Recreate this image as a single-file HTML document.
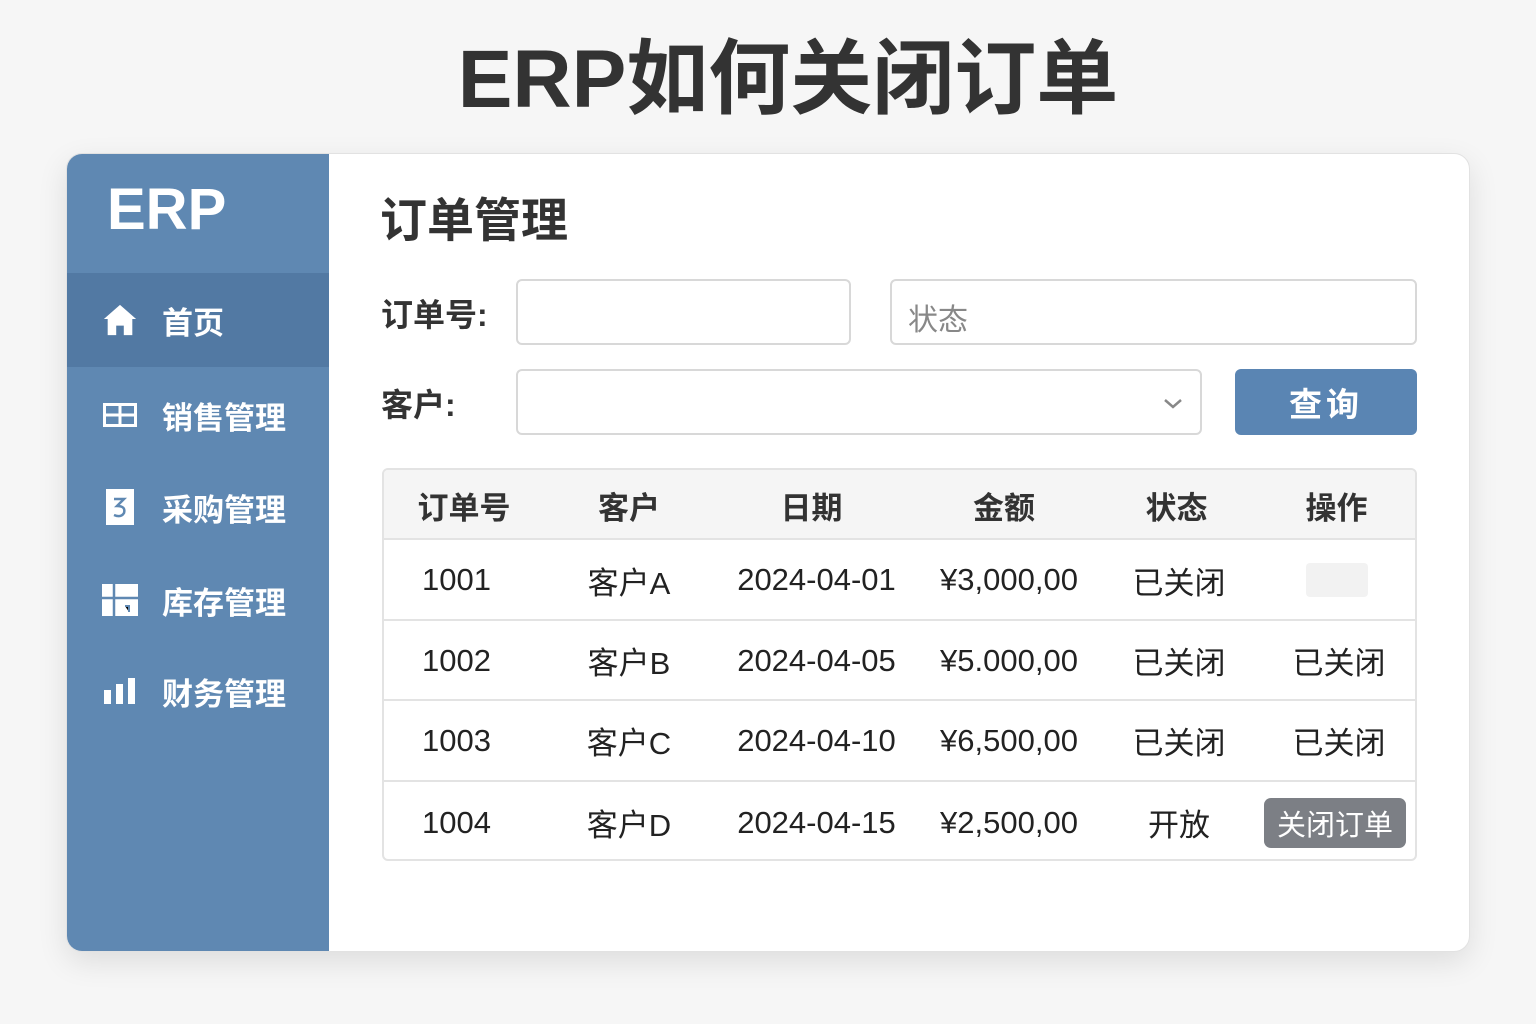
<!DOCTYPE html>
<html><head><meta charset="utf-8"><style>
*{margin:0;padding:0;box-sizing:border-box}
body{width:1536px;height:1024px;background:#f6f6f6;font-family:"Liberation Sans","Noto Sans CJK SC",sans-serif;position:relative;overflow:hidden;color:#222}
.title{position:absolute;top:30px;left:20px;width:1536px;text-align:center;font-size:82px;font-weight:bold;color:#333;line-height:100px}
.card{position:absolute;left:66px;top:153px;width:1404px;height:799px;background:#fff;border-radius:16px;box-shadow:0 10px 30px rgba(0,0,0,.1);overflow:hidden;border:1px solid #e2e2e2}
.side{position:absolute;left:0;top:0;width:262px;height:100%;background:#5f88b2}
.logo{position:absolute;left:40px;top:22px;font-size:58px;font-weight:bold;color:#fff}
.item{position:absolute;left:0;width:262px;height:94px;display:flex;align-items:center;color:#fff;font-size:31px;font-weight:bold}
.item.act{background:#5279a3}
.item .ic{width:36px;margin-left:35px;margin-right:24px;display:flex;justify-content:center}
.abs{position:absolute}
.lbl{font-size:32px;color:#333;font-weight:bold}
.inp{position:absolute;border:2px solid #d8d8d8;border-radius:6px;background:#fff}
.btn{position:absolute;left:1168px;top:215px;width:182px;height:66px;background:#5a85b3;border-radius:6px;color:#fff;font-size:33px;font-weight:bold;display:flex;align-items:center;justify-content:center;letter-spacing:4px}
.tbl{position:absolute;left:315px;top:314px;width:1035px;height:393px;border:2px solid #e3e3e3;border-radius:6px;overflow:hidden}
.row{position:absolute;left:0;width:100%;border-top:2px solid #e3e3e3}
.c{position:absolute;top:0;height:100%;display:flex;align-items:center;justify-content:center;font-size:31px;color:#222}
.hd{background:#f5f5f5;border-top:none}
.hd .c{font-weight:bold;color:#333}
</style></head><body>
<div class="title">ERP如何关闭订单</div>
<div class="card">
<div class="side">
<div class="logo">ERP</div>
<div class="item act" style="top:119px"><span class="ic"><svg width="38" height="36" viewBox="0 0 38 36"><path d="M19 2 L36 17 L32 17 L32 34 L23 34 L23 24 L15 24 L15 34 L6 34 L6 17 L2 17Z" fill="#fff"/></svg></span>首页</div>
<div class="item" style="top:214px"><span class="ic"><svg width="34" height="24" viewBox="0 0 34 24"><rect x="1.5" y="1.5" width="31" height="21" fill="none" stroke="#fff" stroke-width="3"/><path d="M1.5 12H32.5M17 1.5V22.5" stroke="#fff" stroke-width="3"/></svg></span>销售管理</div>
<div class="item" style="top:306px"><span class="ic"><svg width="28" height="36" viewBox="0 0 28 36"><rect width="28" height="36" fill="#fff"/><path d="M8 10H18L11 17Q20 17 18 24Q15 29 8 26" stroke="#5f88b2" stroke-width="2.5" fill="none"/></svg></span>采购管理</div>
<div class="item" style="top:399px"><span class="ic"><svg width="36" height="32" viewBox="0 0 36 32"><rect width="36" height="32" fill="#fff"/><path d="M0 14H36M12 0V32" stroke="#5f88b2" stroke-width="2.5"/><path d="M23 22H27V28" stroke="#5f88b2" stroke-width="2"/></svg></span>库存管理</div>
<div class="item" style="top:490px"><span class="ic"><svg width="32" height="26" viewBox="0 0 32 26"><rect x="0" y="12" width="7" height="14" fill="#fff"/><rect x="12" y="6" width="7" height="20" fill="#fff"/><rect x="24" y="0" width="7" height="26" fill="#fff"/></svg></span>财务管理</div>
</div>
<div class="abs" style="left:313px;top:28px;font-size:47px;font-weight:bold;color:#333">订单管理</div>
<div class="abs lbl" style="left:314px;top:136px">订单号:</div>
<div class="inp" style="left:449px;top:125px;width:335px;height:66px"></div>
<div class="inp" style="left:823px;top:125px;width:527px;height:66px;font-size:30px;color:#888;padding:14px 0 0 16px">状态</div>
<div class="abs lbl" style="left:314px;top:226px">客户:</div>
<div class="inp" style="left:449px;top:215px;width:686px;height:66px"><svg class="abs" style="right:16px;top:26px" width="22" height="14" viewBox="0 0 22 14"><path d="M3 3L11 10L19 3" stroke="#888" stroke-width="2.5" fill="none"/></svg></div>
<div class="btn">查询</div>
<div class="tbl">
<div class="row hd" style="top:0;height:70px"><div class="c" style="left:0;width:160px">订单号</div><div class="c" style="left:160px;width:170px">客户</div><div class="c" style="left:330px;width:195px">日期</div><div class="c" style="left:525px;width:190px">金额</div><div class="c" style="left:715px;width:155px">状态</div><div class="c" style="left:870px;width:165px">操作</div></div>
<div class="row" style="top:68px;height:82px"><div class="c" style="left:0;width:145px">1001</div><div class="c" style="left:160px;width:170px">客户A</div><div class="c" style="left:330px;width:205px">2024-04-01</div><div class="c" style="left:525px;width:200px">¥3,000,00</div><div class="c" style="left:715px;width:160px">已关闭</div><div class="c" style="left:870px;width:165px"><div style="width:62px;height:34px;background:#f2f2f2;border-radius:4px"></div></div></div>
<div class="row" style="top:149px;height:81px"><div class="c" style="left:0;width:145px">1002</div><div class="c" style="left:160px;width:170px">客户B</div><div class="c" style="left:330px;width:205px">2024-04-05</div><div class="c" style="left:525px;width:200px">¥5.000,00</div><div class="c" style="left:715px;width:160px">已关闭</div><div class="c" style="left:870px;width:170px">已关闭</div></div>
<div class="row" style="top:229px;height:81px"><div class="c" style="left:0;width:145px">1003</div><div class="c" style="left:160px;width:170px">客户C</div><div class="c" style="left:330px;width:205px">2024-04-10</div><div class="c" style="left:525px;width:200px">¥6,500,00</div><div class="c" style="left:715px;width:160px">已关闭</div><div class="c" style="left:870px;width:170px">已关闭</div></div>
<div class="row" style="top:310px;height:83px"><div class="c" style="left:0;width:145px">1004</div><div class="c" style="left:160px;width:170px">客户D</div><div class="c" style="left:330px;width:205px">2024-04-15</div><div class="c" style="left:525px;width:200px">¥2,500,00</div><div class="c" style="left:715px;width:160px">开放</div><div class="c" style="left:880px;width:142px"><div style="width:142px;height:50px;background:#7c7f85;border-radius:7px;color:#fff;font-size:29px;display:flex;align-items:center;justify-content:center">关闭订单</div></div></div>
</div>
</div>
</body></html>
